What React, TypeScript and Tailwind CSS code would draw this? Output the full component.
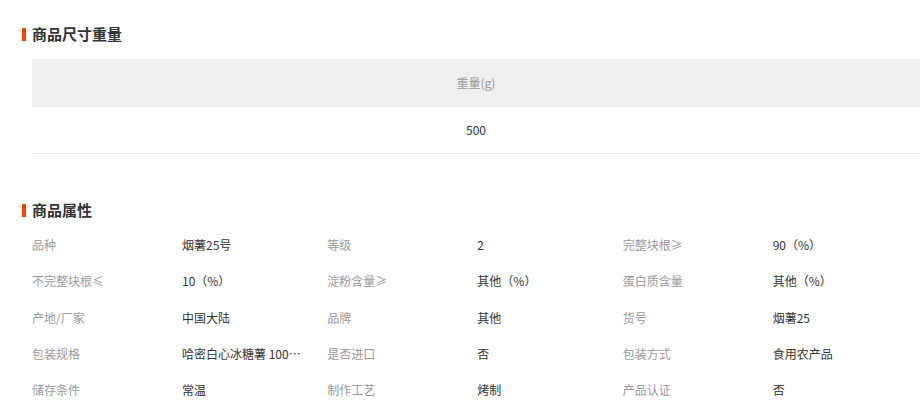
import React from 'react';

const attrs = [
  ['品种', '烟薯25号'],
  ['等级', '2'],
  ['完整块根≥', '90（%）'],
  ['不完整块根≤', '10（%）'],
  ['淀粉含量≥', '其他（%）'],
  ['蛋白质含量', '其他（%）'],
  ['产地/厂家', '中国大陆'],
  ['品牌', '其他'],
  ['货号', '烟薯25'],
  ['包装规格', '哈密白心冰糖薯 1000g*2'],
  ['是否进口', '否'],
  ['包装方式', '食用农产品'],
  ['储存条件', '常温'],
  ['制作工艺', '烤制'],
  ['产品认证', '否'],
];

function Title({ text }: { text: string }) {
  return (
    <div className="flex items-center h-5 pl-[22px]">
      <span className="w-1 h-[13px] bg-[#ff4400] mr-[6px]" />
      <h2 className="text-[15px] font-bold text-[#333] leading-5">{text}</h2>
    </div>
  );
}

export default function App() {
  return (
    <div
      className="w-[924px] h-[409px] bg-white overflow-hidden pt-6"
      style={{ fontFamily: '"Noto Sans CJK SC", "Noto Sans", sans-serif' }}
    >
      <Title text="商品尺寸重量" />
      <div className="ml-8 mt-[15px] w-[888px] text-xs">
        <div className="h-[48px] bg-[#f0f0f0] flex items-center justify-center text-[#999] border-b border-[#e8e8e8]">
          重量(g)
        </div>
        <div className="h-[47px] flex items-center justify-center text-[#333] border-b border-[#e8e8e8]">
          500
        </div>
      </div>

      <div className="mt-[46px]">
        <Title text="商品属性" />
      </div>
      <div className="ml-8 mt-[7px] w-[886px] grid grid-cols-3 text-xs">
        {attrs.map(([label, value]) => (
          <div key={label} className="flex items-center h-[36.3px]">
            <span className="w-[150px] shrink-0 text-[#999]">{label}</span>
            <span className="max-w-[122px] truncate text-[#333]">{value}</span>
          </div>
        ))}
      </div>
    </div>
  );
}
